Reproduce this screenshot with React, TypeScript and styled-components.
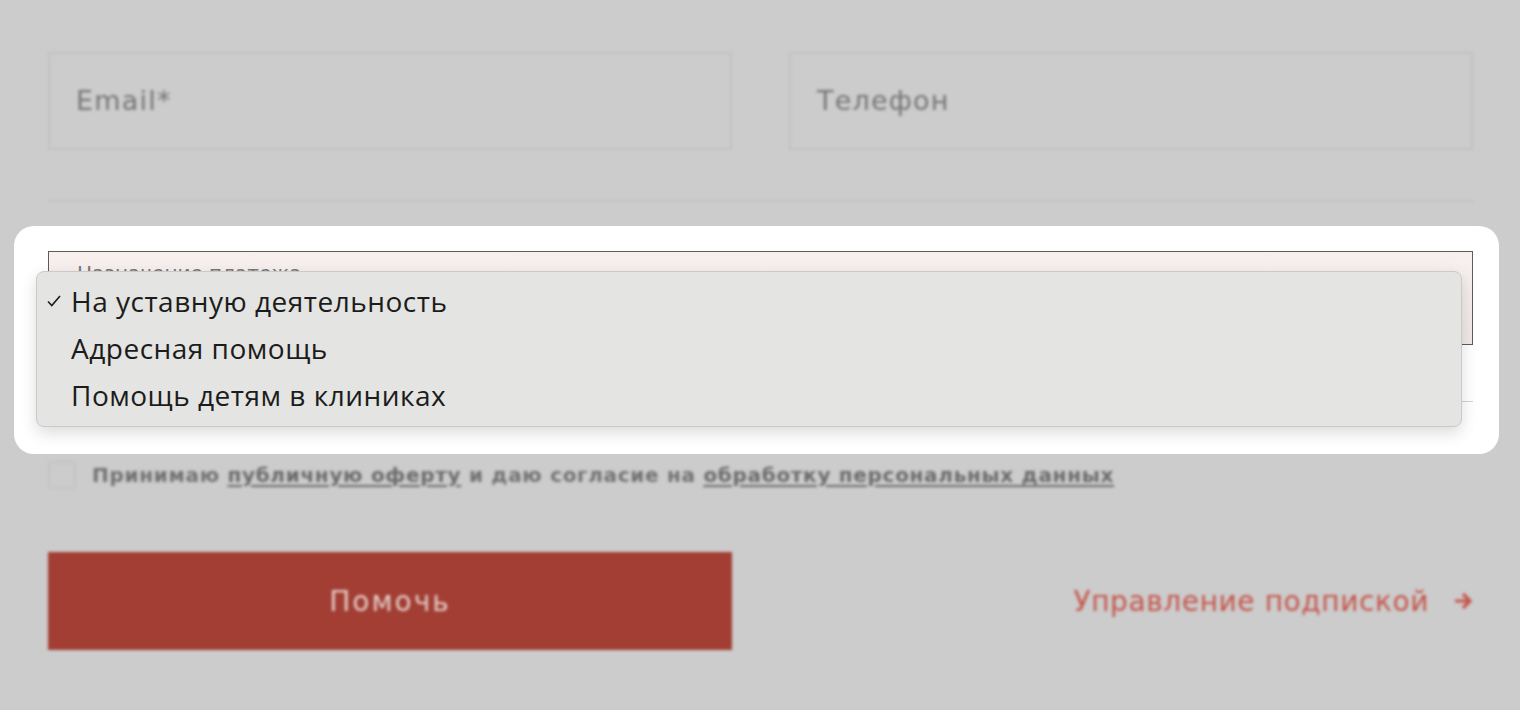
import { FC } from 'react'
import styled, { createGlobalStyle } from 'styled-components'

const GlobalStyle = createGlobalStyle`
  html, body {
    margin: 0;
    background: #cccccc;
  }
  body {
    font-family: "DejaVu Sans", "Noto Sans", sans-serif;
  }
`

const Page = styled.div`
  width: 1520px;
  height: 710px;
  overflow: hidden;
  box-sizing: border-box;
  padding: 52px 47px 0 48px;
  display: flex;
  flex-direction: column;
`

const Blurred = styled.div<{ $mt?: number }>`
  filter: blur(1.4px);
  margin-top: ${p => p.$mt ?? 0}px;
`

const TwoCols = styled.div`
  display: grid;
  grid-template-columns: 1fr 1fr;
  column-gap: 57px;
  align-items: center;
`

const TextField = styled.div`
  height: 98px;
  box-sizing: border-box;
  border: 2px solid #c2c2c2;
  display: flex;
  align-items: center;
  padding: 0 0 2px 26px;
  font-size: 27px;
  letter-spacing: 1.2px;
  color: #747474;
`

const Divider = styled.div<{ $mt?: number; $color?: string; $h?: number }>`
  margin-top: ${p => p.$mt ?? 0}px;
  height: ${p => p.$h ?? 2}px;
  background: ${p => p.$color ?? '#c4c4c4'};
`

const Highlight = styled.div`
  margin: 24px -26px 0 -34px;
  padding: 25px 26px 0 34px;
  height: 228px;
  box-sizing: border-box;
  background: #ffffff;
  border-radius: 20px;
`

const SelectBox = styled.div`
  position: relative;
  height: 94px;
  box-sizing: border-box;
  border: 1px solid #5c5c5c;
  background: linear-gradient(180deg, #f7f0ee 0%, #efe8e6 100%);
  padding: 9px 0 0 28px;
  font-size: 20px;
  color: #777;
`

const Menu = styled.div`
  position: absolute;
  top: 19px;
  left: -13px;
  width: 1426px;
  height: 156px;
  box-sizing: border-box;
  padding-top: 5px;
  background: #e4e4e2;
  border: 1px solid #cacaca;
  border-radius: 8px;
  box-shadow: 0 6px 16px rgba(0, 0, 0, 0.14);
`

const MenuItem = styled.div`
  height: 47px;
  display: flex;
  align-items: center;
  padding-left: 10px;
  font-family: "Open Sans", "Liberation Sans", Arial, sans-serif;
  font-size: 28px;
  letter-spacing: 0.5px;
  color: #1c1c1c;
`

const CheckCell = styled.span`
  width: 24px;
  display: inline-flex;
  align-items: center;
`

const ConsentRow = styled.div`
  display: flex;
  align-items: center;
  gap: 16px;
  height: 30px;
`

const Checkbox = styled.span`
  width: 28px;
  height: 28px;
  box-sizing: border-box;
  border: 2px solid #c4c4c4;
  border-radius: 4px;
`

const ConsentText = styled.span`
  font-size: 20px;
  font-weight: bold;
  letter-spacing: 0.7px;
  color: #717171;
  a {
    color: #6a6a6a;
    text-decoration: underline;
    text-underline-offset: 3px;
  }
`

const SubmitButton = styled.button`
  height: 98px;
  border: none;
  background: #a23e33;
  color: #e6cdc9;
  font-family: inherit;
  font-size: 28px;
  letter-spacing: 2px;
`

const SubscriptionLink = styled.a`
  justify-self: end;
  display: flex;
  align-items: center;
  gap: 24px;
  color: #c4554a;
  font-size: 28px;
  letter-spacing: 0.6px;
  text-decoration: none;
`

const items = ['На уставную деятельность', 'Адресная помощь', 'Помощь детям в клиниках']

const App: FC = () => {
  return (
    <>
      <GlobalStyle />
      <Page>
        <Blurred>
          <TwoCols>
            <TextField>Email*</TextField>
            <TextField>Телефон</TextField>
          </TwoCols>
          <Divider $mt={50} />
        </Blurred>

        <Highlight>
          <SelectBox>
            Назначение платежа
            <Menu>
              {items.map((item, i) => (
                <MenuItem key={item}>
                  <CheckCell>
                    {i === 0 && (
                      <svg width="14" height="12" viewBox="0 0 14 12">
                        <path d="M1 6.5 L4.8 10.5 L13 1" fill="none" stroke="#1c1c1c" strokeWidth="1.6" />
                      </svg>
                    )}
                  </CheckCell>
                  {item}
                </MenuItem>
              ))}
            </Menu>
          </SelectBox>
          <Divider $mt={56} $h={1} $color="#d2d2d2" />
        </Highlight>

        <Blurred $mt={6}>
          <ConsentRow>
            <Checkbox />
            <ConsentText>
              Принимаю <a>публичную оферту</a> и даю согласие на <a>обработку персональных данных</a>
            </ConsentText>
          </ConsentRow>
        </Blurred>

        <Blurred $mt={62}>
          <TwoCols>
            <SubmitButton>Помочь</SubmitButton>
            <SubscriptionLink>
              Управление подпиской
              <svg width="20" height="18" viewBox="0 0 20 18">
                <path d="M2 9 H17 M10 2 L17 9 L10 16" fill="none" stroke="#c4554a" strokeWidth="3.2" />
              </svg>
            </SubscriptionLink>
          </TwoCols>
        </Blurred>
      </Page>
    </>
  )
}

export default App
